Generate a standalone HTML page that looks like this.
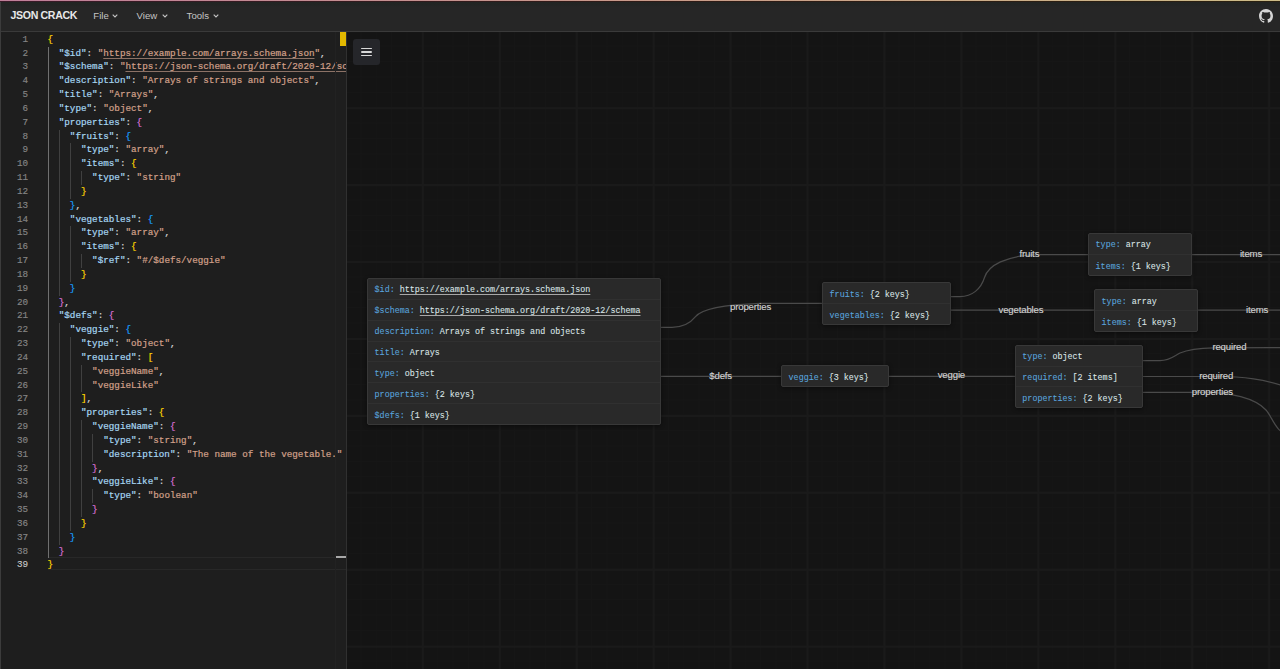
<!DOCTYPE html>
<html><head><meta charset="utf-8">
<style>
*{margin:0;padding:0;box-sizing:border-box}
html,body{width:1280px;height:669px;overflow:hidden;background:#141414}
body{position:relative;font-family:"Liberation Sans",sans-serif}
#topline{position:absolute;left:0;top:0;width:1280px;height:1px;background:linear-gradient(90deg,#c07f9a,#c89a8a 50%,#ccbc88)}
#topline2{position:absolute;left:0;top:1px;width:1280px;height:1px;background:linear-gradient(90deg,#3a1a28,#2e1a16 50%,#2a2010)}
#header{position:absolute;left:0;top:2px;width:1280px;height:29px;background:linear-gradient(#222423 0px,#232524 3px,#262626 5px,#262626 100%)}
#hborder{position:absolute;left:0;top:31px;width:1280px;height:1px;background:#3a3a3a}
.brand{position:absolute;left:10.5px;top:8.5px;font-weight:bold;font-size:10.6px;letter-spacing:-0.35px;color:#e8e8e8;white-space:nowrap}
.menu{position:absolute;top:9.5px;font-size:9.6px;color:#c4c4c4;white-space:nowrap}
.chev{position:absolute;top:13.8px;width:6px;height:4px}
#editor{position:absolute;left:0;top:32px;width:347px;height:637px;background:#1e1e1e;overflow:hidden}
#edleft{position:absolute;left:0;top:2px;width:1px;height:667px;background:#3c3c3c}
#code{position:absolute;left:0;top:-32px;width:347px;height:669px}
.cl{position:absolute;left:47.60px;height:13.84px;line-height:13.84px;font-family:"Liberation Mono",monospace;font-size:9.28px;white-space:pre;color:#d4d4d4;-webkit-text-stroke:0.2px currentColor}
.ln{position:absolute;left:0;width:28.00px;text-align:right;height:13.84px;line-height:13.84px;font-family:"Liberation Mono",monospace;font-size:9.28px;color:#858585;-webkit-text-stroke:0.15px currentColor}
.ln.act{color:#c6c6c6}
.k{color:#a6d6f2}.s{color:#d2a08a}.p{color:#d4d4d4}
.cl u{text-decoration:underline;text-underline-offset:2px;text-decoration-thickness:0.6px;text-decoration-color:#8c7266}
.g{position:absolute;width:1px;height:13.84px;background:#404040}
.g.act{background:#707070;width:1.2px}
#curline{position:absolute;left:47.60px;top:557.2px;width:300px;height:12.8px;border-top:1px solid #282828;border-bottom:1px solid #282828}
#ruler{position:absolute;left:335px;top:32px;width:1px;height:637px;background:#222222}
#ymark{position:absolute;left:340px;top:32px;width:6px;height:14px;background:#e2b800}
#cmark{position:absolute;left:335.5px;top:556px;width:11px;height:2px;background:#a8a8a8}
#divider{position:absolute;left:346px;top:32px;width:1.2px;height:637px;background:#303030}
#graph{position:absolute;left:347px;top:32px;width:933px;height:637px;overflow:hidden;background-color:#141414;
 background-image:
  linear-gradient(#1a1a1a 1.5px, transparent 1.5px),
  linear-gradient(90deg,#1a1a1a 1.5px, transparent 1.5px),
  linear-gradient(#161616 1px, transparent 1px),
  linear-gradient(90deg,#161616 1px, transparent 1px);
 background-size:76.95px 76.95px,76.95px 76.95px,15.39px 15.39px,15.39px 15.39px;
 background-position:74.9px 75.2px,74.9px 75.2px,74.9px 75.2px,74.9px 75.2px}
#menubtn{position:absolute;left:353px;top:39.4px;width:27px;height:25.4px;border-radius:3px;background:#25262a}
#menubtn i{position:absolute;left:8px;width:11px;height:1.5px;background:#d8d8d8;border-radius:1px}
.edges{position:absolute;left:0;top:0}
.edges path{fill:none;stroke:#4a4a4a;stroke-width:1.2}
.node{position:absolute;background:#292929;border:1px solid #383838;border-radius:2px;box-shadow:0 1px 4px rgba(0,0,0,0.45)}
.row{position:absolute;left:0;right:0;font-family:"Liberation Mono",monospace;font-size:8.37px;white-space:pre;-webkit-text-stroke:0.08px currentColor;display:flex;align-items:center;padding-top:2.0px}
.div{position:absolute;left:0;right:0;height:1px;background:#303030}
.nk{color:#5aa4de}.nv{color:#dce5e7}
.nv u{text-underline-offset:1.6px;text-decoration-thickness:0.6px;text-decoration-color:#a8a8a8}
.lbl{position:absolute;letter-spacing:-0.15px;font-size:9.60px;color:#d0d0d0;-webkit-text-stroke:0.15px currentColor;white-space:nowrap;line-height:1}
#gh{position:absolute;left:1259px;top:8.6px;width:14px;height:14px}
</style></head><body>
<div id="header"></div>
<div id="topline"></div><div id="topline2"></div>
<div id="hborder"></div>
<div class="brand">JSON CRACK</div>
<div class="menu" style="left:93.3px">File</div>
<svg class="chev" style="left:112.3px" viewBox="0 0 6 4"><path d="M0.7,0.7 L3,3 L5.3,0.7" fill="none" stroke="#c4c4c4" stroke-width="1.1"/></svg>
<div class="menu" style="left:136.6px">View</div>
<svg class="chev" style="left:162.0px" viewBox="0 0 6 4"><path d="M0.7,0.7 L3,3 L5.3,0.7" fill="none" stroke="#c4c4c4" stroke-width="1.1"/></svg>
<div class="menu" style="left:186.6px">Tools</div>
<svg class="chev" style="left:213.2px" viewBox="0 0 6 4"><path d="M0.7,0.7 L3,3 L5.3,0.7" fill="none" stroke="#c4c4c4" stroke-width="1.1"/></svg>
<svg id="gh" viewBox="0 0 16 16"><path fill="#d4d4d4" d="M8 0C3.58 0 0 3.58 0 8c0 3.54 2.29 6.53 5.47 7.59.4.07.55-.17.55-.38 0-.19-.01-.82-.01-1.49-2.01.37-2.53-.49-2.69-.94-.09-.23-.48-.94-.82-1.13-.28-.15-.68-.52-.01-.53.63-.01 1.08.58 1.23.82.72 1.21 1.87.87 2.33.66.07-.52.28-.87.51-1.07-1.78-.2-3.64-.89-3.64-3.95 0-.87.31-1.59.82-2.15-.08-.2-.36-1.02.08-2.12 0 0 .67-.21 2.2.82.64-.18 1.32-.27 2-.27.68 0 1.36.09 2 .27 1.53-1.04 2.2-.82 2.2-.82.44 1.1.16 1.92.08 2.12.51.56.82 1.27.82 2.15 0 3.07-1.87 3.75-3.65 3.95.29.25.54.73.54 1.48 0 1.07-.01 1.93-.01 2.2 0 .21.15.46.55.38A8.013 8.013 0 0016 8c0-4.42-3.58-8-8-8z"/></svg>
<div id="editor">
<div id="code">
<div id="curline"></div>
<div class="g act" style="top:46.59px;left:47.60px"></div>
<div class="g act" style="top:60.42px;left:47.60px"></div>
<div class="g act" style="top:74.25px;left:47.60px"></div>
<div class="g act" style="top:88.09px;left:47.60px"></div>
<div class="g act" style="top:101.93px;left:47.60px"></div>
<div class="g act" style="top:115.76px;left:47.60px"></div>
<div class="g act" style="top:129.59px;left:47.60px"></div>
<div class="g" style="top:129.59px;left:58.74px"></div>
<div class="g act" style="top:143.43px;left:47.60px"></div>
<div class="g" style="top:143.43px;left:58.74px"></div>
<div class="g" style="top:143.43px;left:69.88px"></div>
<div class="g act" style="top:157.27px;left:47.60px"></div>
<div class="g" style="top:157.27px;left:58.74px"></div>
<div class="g" style="top:157.27px;left:69.88px"></div>
<div class="g act" style="top:171.10px;left:47.60px"></div>
<div class="g" style="top:171.10px;left:58.74px"></div>
<div class="g" style="top:171.10px;left:69.88px"></div>
<div class="g" style="top:171.10px;left:81.02px"></div>
<div class="g act" style="top:184.94px;left:47.60px"></div>
<div class="g" style="top:184.94px;left:58.74px"></div>
<div class="g" style="top:184.94px;left:69.88px"></div>
<div class="g act" style="top:198.77px;left:47.60px"></div>
<div class="g" style="top:198.77px;left:58.74px"></div>
<div class="g act" style="top:212.61px;left:47.60px"></div>
<div class="g" style="top:212.61px;left:58.74px"></div>
<div class="g act" style="top:226.44px;left:47.60px"></div>
<div class="g" style="top:226.44px;left:58.74px"></div>
<div class="g" style="top:226.44px;left:69.88px"></div>
<div class="g act" style="top:240.28px;left:47.60px"></div>
<div class="g" style="top:240.28px;left:58.74px"></div>
<div class="g" style="top:240.28px;left:69.88px"></div>
<div class="g act" style="top:254.11px;left:47.60px"></div>
<div class="g" style="top:254.11px;left:58.74px"></div>
<div class="g" style="top:254.11px;left:69.88px"></div>
<div class="g" style="top:254.11px;left:81.02px"></div>
<div class="g act" style="top:267.95px;left:47.60px"></div>
<div class="g" style="top:267.95px;left:58.74px"></div>
<div class="g" style="top:267.95px;left:69.88px"></div>
<div class="g act" style="top:281.78px;left:47.60px"></div>
<div class="g" style="top:281.78px;left:58.74px"></div>
<div class="g act" style="top:295.62px;left:47.60px"></div>
<div class="g act" style="top:309.45px;left:47.60px"></div>
<div class="g act" style="top:323.29px;left:47.60px"></div>
<div class="g" style="top:323.29px;left:58.74px"></div>
<div class="g act" style="top:337.12px;left:47.60px"></div>
<div class="g" style="top:337.12px;left:58.74px"></div>
<div class="g" style="top:337.12px;left:69.88px"></div>
<div class="g act" style="top:350.96px;left:47.60px"></div>
<div class="g" style="top:350.96px;left:58.74px"></div>
<div class="g" style="top:350.96px;left:69.88px"></div>
<div class="g act" style="top:364.79px;left:47.60px"></div>
<div class="g" style="top:364.79px;left:58.74px"></div>
<div class="g" style="top:364.79px;left:69.88px"></div>
<div class="g" style="top:364.79px;left:81.02px"></div>
<div class="g act" style="top:378.62px;left:47.60px"></div>
<div class="g" style="top:378.62px;left:58.74px"></div>
<div class="g" style="top:378.62px;left:69.88px"></div>
<div class="g" style="top:378.62px;left:81.02px"></div>
<div class="g act" style="top:392.46px;left:47.60px"></div>
<div class="g" style="top:392.46px;left:58.74px"></div>
<div class="g" style="top:392.46px;left:69.88px"></div>
<div class="g act" style="top:406.30px;left:47.60px"></div>
<div class="g" style="top:406.30px;left:58.74px"></div>
<div class="g" style="top:406.30px;left:69.88px"></div>
<div class="g act" style="top:420.13px;left:47.60px"></div>
<div class="g" style="top:420.13px;left:58.74px"></div>
<div class="g" style="top:420.13px;left:69.88px"></div>
<div class="g" style="top:420.13px;left:81.02px"></div>
<div class="g act" style="top:433.97px;left:47.60px"></div>
<div class="g" style="top:433.97px;left:58.74px"></div>
<div class="g" style="top:433.97px;left:69.88px"></div>
<div class="g" style="top:433.97px;left:81.02px"></div>
<div class="g" style="top:433.97px;left:92.16px"></div>
<div class="g act" style="top:447.80px;left:47.60px"></div>
<div class="g" style="top:447.80px;left:58.74px"></div>
<div class="g" style="top:447.80px;left:69.88px"></div>
<div class="g" style="top:447.80px;left:81.02px"></div>
<div class="g" style="top:447.80px;left:92.16px"></div>
<div class="g act" style="top:461.64px;left:47.60px"></div>
<div class="g" style="top:461.64px;left:58.74px"></div>
<div class="g" style="top:461.64px;left:69.88px"></div>
<div class="g" style="top:461.64px;left:81.02px"></div>
<div class="g act" style="top:475.47px;left:47.60px"></div>
<div class="g" style="top:475.47px;left:58.74px"></div>
<div class="g" style="top:475.47px;left:69.88px"></div>
<div class="g" style="top:475.47px;left:81.02px"></div>
<div class="g act" style="top:489.31px;left:47.60px"></div>
<div class="g" style="top:489.31px;left:58.74px"></div>
<div class="g" style="top:489.31px;left:69.88px"></div>
<div class="g" style="top:489.31px;left:81.02px"></div>
<div class="g" style="top:489.31px;left:92.16px"></div>
<div class="g act" style="top:503.14px;left:47.60px"></div>
<div class="g" style="top:503.14px;left:58.74px"></div>
<div class="g" style="top:503.14px;left:69.88px"></div>
<div class="g" style="top:503.14px;left:81.02px"></div>
<div class="g act" style="top:516.98px;left:47.60px"></div>
<div class="g" style="top:516.98px;left:58.74px"></div>
<div class="g" style="top:516.98px;left:69.88px"></div>
<div class="g act" style="top:530.81px;left:47.60px"></div>
<div class="g" style="top:530.81px;left:58.74px"></div>
<div class="g act" style="top:544.64px;left:47.60px"></div>
<div class="cl" style="top:32.75px"><span style="color:#ffd700">{</span></div>
<div class="ln" style="top:32.75px">1</div>
<div class="cl" style="top:46.59px">  <span class="k">&quot;$id&quot;</span><span class="p">:</span> <span class="s">"<u>https://example.com/arrays.schema.json</u>"</span><span class="p">,</span></div>
<div class="ln" style="top:46.59px">2</div>
<div class="cl" style="top:60.42px">  <span class="k">&quot;$schema&quot;</span><span class="p">:</span> <span class="s">"<u>https://json-schema.org/draft/2020-12/schema</u>"</span><span class="p">,</span></div>
<div class="ln" style="top:60.42px">3</div>
<div class="cl" style="top:74.25px">  <span class="k">&quot;description&quot;</span><span class="p">:</span> <span class="s">&quot;Arrays of strings and objects&quot;</span><span class="p">,</span></div>
<div class="ln" style="top:74.25px">4</div>
<div class="cl" style="top:88.09px">  <span class="k">&quot;title&quot;</span><span class="p">:</span> <span class="s">&quot;Arrays&quot;</span><span class="p">,</span></div>
<div class="ln" style="top:88.09px">5</div>
<div class="cl" style="top:101.93px">  <span class="k">&quot;type&quot;</span><span class="p">:</span> <span class="s">&quot;object&quot;</span><span class="p">,</span></div>
<div class="ln" style="top:101.93px">6</div>
<div class="cl" style="top:115.76px">  <span class="k">&quot;properties&quot;</span><span class="p">:</span> <span style="color:#da70d6">{</span></div>
<div class="ln" style="top:115.76px">7</div>
<div class="cl" style="top:129.59px">    <span class="k">&quot;fruits&quot;</span><span class="p">:</span> <span style="color:#179fff">{</span></div>
<div class="ln" style="top:129.59px">8</div>
<div class="cl" style="top:143.43px">      <span class="k">&quot;type&quot;</span><span class="p">:</span> <span class="s">&quot;array&quot;</span><span class="p">,</span></div>
<div class="ln" style="top:143.43px">9</div>
<div class="cl" style="top:157.27px">      <span class="k">&quot;items&quot;</span><span class="p">:</span> <span style="color:#ffd700">{</span></div>
<div class="ln" style="top:157.27px">10</div>
<div class="cl" style="top:171.10px">        <span class="k">&quot;type&quot;</span><span class="p">:</span> <span class="s">&quot;string&quot;</span></div>
<div class="ln" style="top:171.10px">11</div>
<div class="cl" style="top:184.94px">      <span style="color:#ffd700">}</span></div>
<div class="ln" style="top:184.94px">12</div>
<div class="cl" style="top:198.77px">    <span style="color:#179fff">}</span><span class="p">,</span></div>
<div class="ln" style="top:198.77px">13</div>
<div class="cl" style="top:212.61px">    <span class="k">&quot;vegetables&quot;</span><span class="p">:</span> <span style="color:#179fff">{</span></div>
<div class="ln" style="top:212.61px">14</div>
<div class="cl" style="top:226.44px">      <span class="k">&quot;type&quot;</span><span class="p">:</span> <span class="s">&quot;array&quot;</span><span class="p">,</span></div>
<div class="ln" style="top:226.44px">15</div>
<div class="cl" style="top:240.28px">      <span class="k">&quot;items&quot;</span><span class="p">:</span> <span style="color:#ffd700">{</span></div>
<div class="ln" style="top:240.28px">16</div>
<div class="cl" style="top:254.11px">        <span class="k">&quot;$ref&quot;</span><span class="p">:</span> <span class="s">&quot;#/$defs/veggie&quot;</span></div>
<div class="ln" style="top:254.11px">17</div>
<div class="cl" style="top:267.95px">      <span style="color:#ffd700">}</span></div>
<div class="ln" style="top:267.95px">18</div>
<div class="cl" style="top:281.78px">    <span style="color:#179fff">}</span></div>
<div class="ln" style="top:281.78px">19</div>
<div class="cl" style="top:295.62px">  <span style="color:#da70d6">}</span><span class="p">,</span></div>
<div class="ln" style="top:295.62px">20</div>
<div class="cl" style="top:309.45px">  <span class="k">&quot;$defs&quot;</span><span class="p">:</span> <span style="color:#da70d6">{</span></div>
<div class="ln" style="top:309.45px">21</div>
<div class="cl" style="top:323.29px">    <span class="k">&quot;veggie&quot;</span><span class="p">:</span> <span style="color:#179fff">{</span></div>
<div class="ln" style="top:323.29px">22</div>
<div class="cl" style="top:337.12px">      <span class="k">&quot;type&quot;</span><span class="p">:</span> <span class="s">&quot;object&quot;</span><span class="p">,</span></div>
<div class="ln" style="top:337.12px">23</div>
<div class="cl" style="top:350.96px">      <span class="k">&quot;required&quot;</span><span class="p">:</span> <span style="color:#ffd700">[</span></div>
<div class="ln" style="top:350.96px">24</div>
<div class="cl" style="top:364.79px">        <span class="s">&quot;veggieName&quot;</span><span class="p">,</span></div>
<div class="ln" style="top:364.79px">25</div>
<div class="cl" style="top:378.62px">        <span class="s">&quot;veggieLike&quot;</span></div>
<div class="ln" style="top:378.62px">26</div>
<div class="cl" style="top:392.46px">      <span style="color:#ffd700">]</span><span class="p">,</span></div>
<div class="ln" style="top:392.46px">27</div>
<div class="cl" style="top:406.30px">      <span class="k">&quot;properties&quot;</span><span class="p">:</span> <span style="color:#ffd700">{</span></div>
<div class="ln" style="top:406.30px">28</div>
<div class="cl" style="top:420.13px">        <span class="k">&quot;veggieName&quot;</span><span class="p">:</span> <span style="color:#da70d6">{</span></div>
<div class="ln" style="top:420.13px">29</div>
<div class="cl" style="top:433.97px">          <span class="k">&quot;type&quot;</span><span class="p">:</span> <span class="s">&quot;string&quot;</span><span class="p">,</span></div>
<div class="ln" style="top:433.97px">30</div>
<div class="cl" style="top:447.80px">          <span class="k">&quot;description&quot;</span><span class="p">:</span> <span class="s">&quot;The name of the vegetable.&quot;</span></div>
<div class="ln" style="top:447.80px">31</div>
<div class="cl" style="top:461.64px">        <span style="color:#da70d6">}</span><span class="p">,</span></div>
<div class="ln" style="top:461.64px">32</div>
<div class="cl" style="top:475.47px">        <span class="k">&quot;veggieLike&quot;</span><span class="p">:</span> <span style="color:#da70d6">{</span></div>
<div class="ln" style="top:475.47px">33</div>
<div class="cl" style="top:489.31px">          <span class="k">&quot;type&quot;</span><span class="p">:</span> <span class="s">&quot;boolean&quot;</span></div>
<div class="ln" style="top:489.31px">34</div>
<div class="cl" style="top:503.14px">        <span style="color:#da70d6">}</span></div>
<div class="ln" style="top:503.14px">35</div>
<div class="cl" style="top:516.98px">      <span style="color:#ffd700">}</span></div>
<div class="ln" style="top:516.98px">36</div>
<div class="cl" style="top:530.81px">    <span style="color:#179fff">}</span></div>
<div class="ln" style="top:530.81px">37</div>
<div class="cl" style="top:544.64px">  <span style="color:#da70d6">}</span></div>
<div class="ln" style="top:544.64px">38</div>
<div class="cl" style="top:558.48px"><span style="color:#ffd700">}</span></div>
<div class="ln act" style="top:558.48px">39</div>
<div id="ruler"></div>
<div id="ymark"></div>
<div id="cmark"></div>
</div></div>
<div id="divider"></div>
<div id="edleft"></div>
<div id="graph"></div>
<svg class="edges" width="1280" height="669" viewBox="0 0 1280 669"><path d="M660,327.3 L672,327.3 C682,327.3 690,323.5 695.5,316.6 C699,312.2 712,305 760,303.3 L822,303.3"/><path d="M660,376.4 L781,376.4"/><path d="M950,296.6 L960,296.6 C972,296.6 981,289 984.5,277.5 C988,266 1005,255 1040,254.6 L1088,254.6"/><path d="M950,310.1 L1094,310.1"/><path d="M1192,254.6 L1281,254.6"/><path d="M1197,310.1 L1281,310.1"/><path d="M889,376.4 L1015,376.4"/><path d="M1143,360.6 L1160,360.6 C1170,360.6 1174,356 1180,353 C1188,349.5 1196,348.2 1214,347.8 L1281,347.6"/><path d="M1143,376.5 L1215,376.5 C1242,376.5 1265,378.5 1292,389"/><path d="M1143,392.4 L1205,392.4 C1230,392.4 1255,398 1266,410 C1272.6,417.2 1275,432 1290,436"/></svg>
<div class="lbl" style="left:730.0px;top:301.6px">properties</div>
<div class="lbl" style="left:709.3px;top:370.6px">$defs</div>
<div class="lbl" style="left:1019.4px;top:248.6px">fruits</div>
<div class="lbl" style="left:998.5px;top:305.2px">vegetables</div>
<div class="lbl" style="left:1239.9px;top:249.4px">items</div>
<div class="lbl" style="left:1246.0px;top:305.2px">items</div>
<div class="lbl" style="left:937.7px;top:370.3px">veggie</div>
<div class="lbl" style="left:1212.4px;top:341.8px">required</div>
<div class="lbl" style="left:1199.2px;top:370.6px">required</div>
<div class="lbl" style="left:1191.8px;top:387.4px">properties</div>
<div class="node" style="left:367.00px;top:278.00px;width:294.00px;height:147.00px"><div class="row" style="top:0.00px;height:20.86px;padding-left:6.60px"><span class="nk">$id: </span><span class="nv"><u>https://example.com/arrays.schema.json</u></span></div><div class="row" style="top:20.86px;height:20.86px;padding-left:6.60px"><span class="nk">$schema: </span><span class="nv"><u>https://json-schema.org/draft/2020-12/schema</u></span></div><div class="div" style="top:19.86px"></div><div class="row" style="top:41.71px;height:20.86px;padding-left:6.60px"><span class="nk">description: </span><span class="nv">Arrays of strings and objects</span></div><div class="div" style="top:40.71px"></div><div class="row" style="top:62.57px;height:20.86px;padding-left:6.60px"><span class="nk">title: </span><span class="nv">Arrays</span></div><div class="div" style="top:61.57px"></div><div class="row" style="top:83.43px;height:20.86px;padding-left:6.60px"><span class="nk">type: </span><span class="nv">object</span></div><div class="div" style="top:82.43px"></div><div class="row" style="top:104.29px;height:20.86px;padding-left:6.60px"><span class="nk">properties: </span><span class="nv">{2 keys}</span></div><div class="div" style="top:103.29px"></div><div class="row" style="top:125.14px;height:20.86px;padding-left:6.60px"><span class="nk">$defs: </span><span class="nv">{1 keys}</span></div><div class="div" style="top:124.14px"></div></div>
<div class="node" style="left:822.00px;top:282.00px;width:128.50px;height:43.00px"><div class="row" style="top:0.00px;height:21.00px;padding-left:6.60px"><span class="nk">fruits: </span><span class="nv">{2 keys}</span></div><div class="row" style="top:21.00px;height:21.00px;padding-left:6.60px"><span class="nk">vegetables: </span><span class="nv">{2 keys}</span></div><div class="div" style="top:20.00px"></div></div>
<div class="node" style="left:781.00px;top:365.00px;width:108.00px;height:22.00px"><div class="row" style="top:0.00px;height:21.00px;padding-left:6.60px"><span class="nk">veggie: </span><span class="nv">{3 keys}</span></div></div>
<div class="node" style="left:1088.00px;top:232.70px;width:104.00px;height:43.50px"><div class="row" style="top:0.00px;height:21.25px;padding-left:6.60px"><span class="nk">type: </span><span class="nv">array</span></div><div class="row" style="top:21.25px;height:21.25px;padding-left:6.60px"><span class="nk">items: </span><span class="nv">{1 keys}</span></div><div class="div" style="top:20.25px"></div></div>
<div class="node" style="left:1094.00px;top:289.00px;width:103.50px;height:43.00px"><div class="row" style="top:0.00px;height:21.00px;padding-left:6.60px"><span class="nk">type: </span><span class="nv">array</span></div><div class="row" style="top:21.00px;height:21.00px;padding-left:6.60px"><span class="nk">items: </span><span class="nv">{1 keys}</span></div><div class="div" style="top:20.00px"></div></div>
<div class="node" style="left:1014.75px;top:344.75px;width:128.50px;height:63.50px"><div class="row" style="top:0.00px;height:20.83px;padding-left:6.60px"><span class="nk">type: </span><span class="nv">object</span></div><div class="row" style="top:20.83px;height:20.83px;padding-left:6.60px"><span class="nk">required: </span><span class="nv">[2 items]</span></div><div class="div" style="top:19.83px"></div><div class="row" style="top:41.67px;height:20.83px;padding-left:6.60px"><span class="nk">properties: </span><span class="nv">{2 keys}</span></div><div class="div" style="top:40.67px"></div></div>
<div id="menubtn"><i style="top:8.5px"></i><i style="top:12.1px"></i><i style="top:15.4px"></i></div>
</body></html>
